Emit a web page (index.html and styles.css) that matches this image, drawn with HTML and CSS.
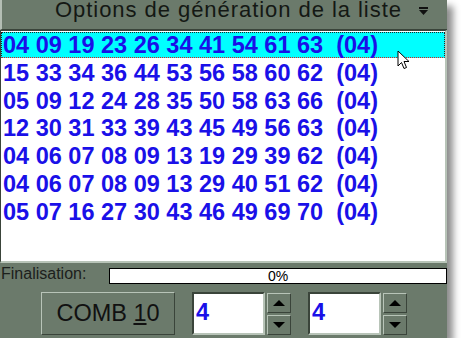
FILE: index.html
```html
<!DOCTYPE html>
<html lang="fr">
<head>
  <meta charset="UTF-8" />
  <title>Options de génération de la liste</title>
  <link rel="stylesheet" href="styles.css">
</head>
<body>
  <div class="window">
    <!-- Header with dropdown arrow -->
    <div class="header">
      <span class="title">Options de génération de la liste</span>
      <svg class="drop" width="9" height="8" viewBox="0 0 9 8">
        <rect x="0" y="0" width="9" height="2" fill="#111"/>
        <polygon points="0,3 9,3 4.5,8" fill="#111"/>
      </svg>
    </div>

    <!-- List of combinations -->
    <div class="list">
      <div class="row selected">04 09 19 23 26 34 41 54 61 63&nbsp; (04)</div>
      <div class="row">15 33 34 36 44 53 56 58 60 62&nbsp; (04)</div>
      <div class="row">05 09 12 24 28 35 50 58 63 66&nbsp; (04)</div>
      <div class="row">12 30 31 33 39 43 45 49 56 63&nbsp; (04)</div>
      <div class="row">04 06 07 08 09 13 19 29 39 62&nbsp; (04)</div>
      <div class="row">04 06 07 08 09 13 29 40 51 62&nbsp; (04)</div>
      <div class="row">05 07 16 27 30 43 46 49 69 70&nbsp; (04)</div>
      <svg class="cursor" width="14" height="20" viewBox="0 0 14 20">
        <path d="M1 1 L1 16 L4.5 12.5 L7 18.5 L9.5 17.5 L7 11.5 L12 11.5 Z" fill="#fff" stroke="#000" stroke-width="1"/>
      </svg>
    </div>

    <!-- Progress -->
    <div class="progress-row">
      <span class="label">Finalisation:</span>
      <div class="bar">0%</div>
    </div>

    <!-- Controls -->
    <div class="controls">
      <button class="comb">COMB <u>1</u>0</button>
      <div class="spin">
        <div class="spin-box">4</div>
        <div class="spin-btns">
          <div class="spin-btn"><span class="arrow up"></span></div>
          <div class="spin-btn"><span class="arrow down"></span></div>
        </div>
      </div>
      <div class="spin">
        <div class="spin-box">4</div>
        <div class="spin-btns">
          <div class="spin-btn"><span class="arrow up"></span></div>
          <div class="spin-btn"><span class="arrow down"></span></div>
        </div>
      </div>
    </div>
  </div>
</body>
</html>
```

FILE: styles.css
```css
body {
  margin: 0;
  background: #fff;
  font-family: 'Liberation Sans', Arial, sans-serif;
}
/* Main dialog panel with drop shadow */
.window {
  width: 447px;
  height: 338px;
  background: #6b7a6b;
  box-shadow: 6px 6px 7px rgba(0, 0, 0, 0.45);
  display: flex;
  flex-direction: column;
}
/* Header bar */
.header {
  height: 30px;
  flex-shrink: 0;
  border-left: 2px solid #b4beb4;
  border-bottom: 1px solid #3a443a;
  display: flex;
  align-items: flex-start;
  box-sizing: border-box;
}
.title {
  margin-left: 53px;
  font-size: 22px;
  line-height: 20px;
  letter-spacing: 0.95px;
  color: #141814;
}
.drop {
  margin-left: auto;
  margin-right: 19px;
  margin-top: 7px;
}
/* List box */
.list {
  position: relative;
  height: 233px;
  flex-shrink: 0;
  padding-top: 1px;
  background: #fff;
  border-top: 1px solid #3a443a;
  border-left: 1px solid #3a443a;
  border-right: 2px solid #b8c4b8;
  border-bottom: 2px solid #b8c4b8;
  box-sizing: border-box;
}
.row {
  height: 27.8px;
  line-height: 27px;
  padding-left: 2px;
  font-size: 23.5px;
  font-weight: bold;
  color: #1a10e8;
  white-space: pre;
  box-sizing: border-box;
}
.row.selected {
  background: #00ffff;
  border: 1px dotted #222;
  border-bottom-color: #d02020;
  height: 26px;
  line-height: 25px;
  padding-left: 1px;
  margin-bottom: 1.8px;
}
.cursor {
  position: absolute;
  left: 396px;
  top: 19px;
}
/* Progress row */
.progress-row {
  height: 29px;
  flex-shrink: 0;
  display: flex;
  align-items: flex-start;
}
.label {
  font-size: 16px;
  color: #1c201c;
  margin-left: 1px;
  margin-top: 2px;
}
.bar {
  margin-left: auto;
  margin-top: 5px;
  width: 338px;
  height: 16px;
  background: #fff;
  border: 1px solid #000;
  box-sizing: border-box;
  font-size: 14px;
  line-height: 14px;
  text-align: center;
  color: #000;
}
/* Bottom controls */
.controls {
  display: flex;
  align-items: flex-start;
  padding-left: 41px;
  gap: 17px;
}
.comb {
  width: 134px;
  height: 43px;
  background: #6b7a6b;
  border: 1px solid;
  border-color: #b8c4b8 #3a443a #3a443a #b8c4b8;
  font-family: 'Liberation Sans', Arial, sans-serif;
  font-size: 23.5px;
  color: #111;
  padding: 0;
}
.spin {
  display: flex;
  gap: 2px;
}
.spin-box {
  width: 73px;
  height: 43px;
  background: #fff;
  border: 2px solid;
  border-color: #3a443a #b8c4b8 #b8c4b8 #3a443a;
  box-sizing: border-box;
  font-size: 23.5px;
  font-weight: bold;
  color: #1a10e8;
  padding-left: 2px;
  line-height: 36px;
}
.spin-btns {
  display: flex;
  flex-direction: column;
  gap: 2px;
  padding-top: 1px;
}
.spin-btn {
  width: 24px;
  height: 20px;
  border: 1px solid;
  border-color: #b8c4b8 #3a443a #3a443a #b8c4b8;
  box-sizing: border-box;
  display: flex;
  align-items: center;
  justify-content: center;
}
.arrow {
  width: 0;
  height: 0;
  border-left: 6px solid transparent;
  border-right: 6px solid transparent;
}
.arrow.up {
  border-bottom: 6px solid #000;
}
.arrow.down {
  border-top: 6px solid #000;
}
```
